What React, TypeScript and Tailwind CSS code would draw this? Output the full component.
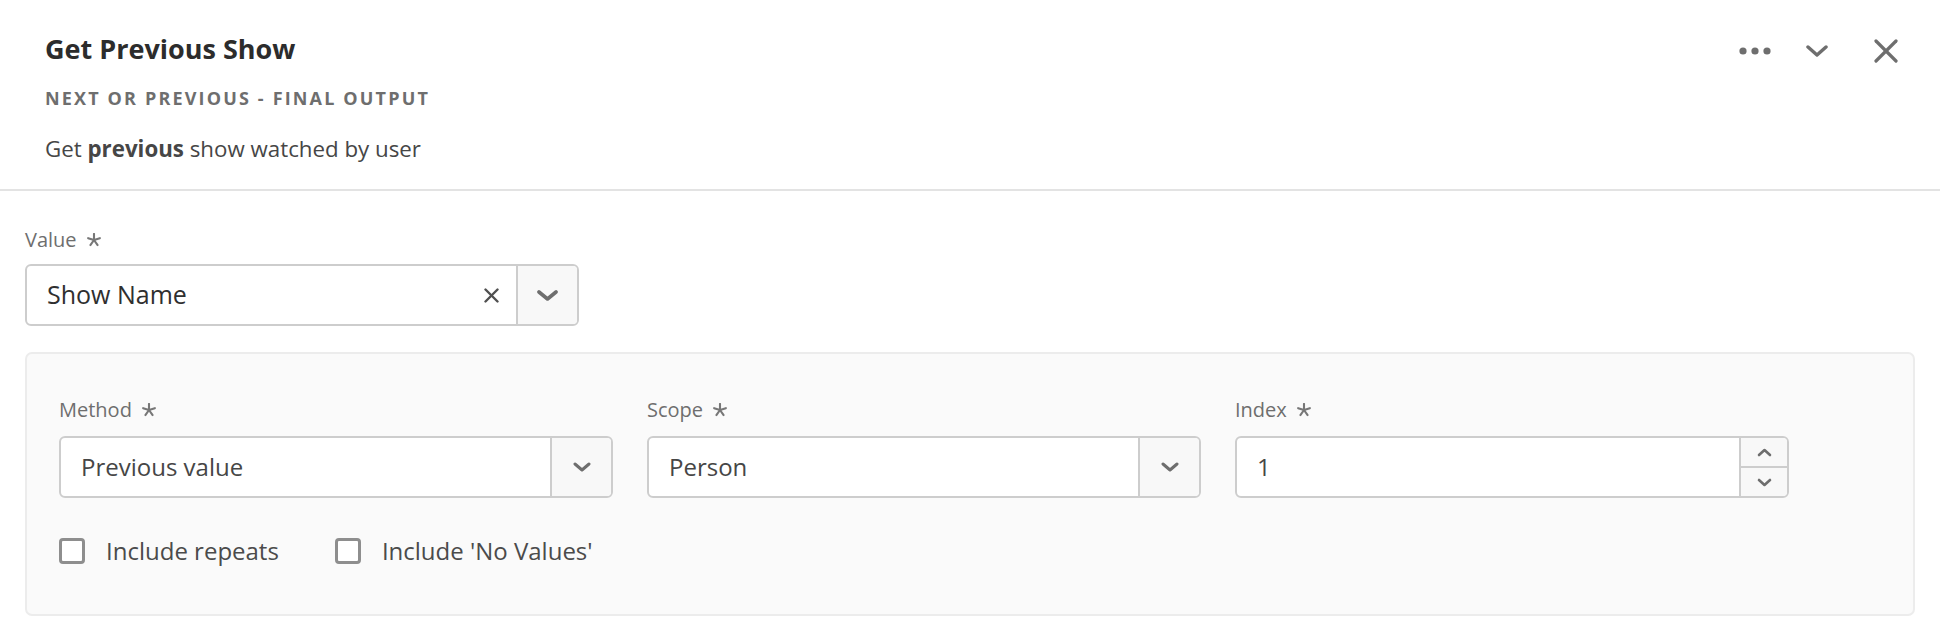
import React from "react";

const Asterisk = () => (
  <svg width="14" height="14" viewBox="0 0 12 12" className="ml-[10px] inline-block">
    <g stroke="#777777" strokeWidth="1.8" strokeLinecap="round">
      <line x1="6" y1="6" x2="6" y2="0.8" />
      <line x1="6" y1="6" x2="11" y2="4.4" />
      <line x1="6" y1="6" x2="9.1" y2="10.3" />
      <line x1="6" y1="6" x2="2.9" y2="10.3" />
      <line x1="6" y1="6" x2="1" y2="4.4" />
    </g>
  </svg>
);

const Chevron = ({ w = 20, h = 10, sw = 3.2, up = false }: { w?: number; h?: number; sw?: number; up?: boolean }) => (
  <svg width={w} height={h} viewBox={`0 0 ${w} ${h}`}>
    <polyline
      points={up ? `2,${h - 2} ${w / 2},2 ${w - 2},${h - 2}` : `2,2 ${w / 2},${h - 2} ${w - 2},2`}
      fill="none"
      stroke="#6e6e6e"
      strokeWidth={sw}
      strokeLinecap="round"
      strokeLinejoin="round"
    />
  </svg>
);

function Label({ text, className = "" }: { text: string; className?: string }) {
  return (
    <div className={`flex items-center text-[20px] leading-[24px] text-[#6e6e6e] ${className}`}>
      {text}
      <Asterisk />
    </div>
  );
}

function Picker({ value }: { value: string }) {
  return (
    <div className="flex h-[62px] w-[554px] rounded-[6px] border-2 border-[#cdcdcd] bg-white overflow-hidden">
      <div className="flex flex-1 items-center pl-[20px] text-[24px] text-[#464646]">{value}</div>
      <div className="flex w-[61px] items-center justify-center border-l-2 border-[#cdcdcd] bg-[#f8f8f8]">
        <Chevron w={18} h={10} sw={3} />
      </div>
    </div>
  );
}

function Check({ label }: { label: string }) {
  return (
    <div className="flex items-center gap-[21px]">
      <div className="h-[26px] w-[26px] rounded-[4px] border-[3px] border-[#8e8e8e] bg-white" />
      <span className="text-[24px] text-[#4b4b4b]">{label}</span>
    </div>
  );
}

export default function App() {
  return (
    <div className="h-[640px] w-[1940px] bg-white font-['Open_Sans',sans-serif]">
      <div className="flex items-start justify-between border-b-2 border-[#e3e3e3] pb-[26px] pl-[45px] pr-[42px] pt-[32px]">
        <div>
          <h1 className="text-[27px] font-bold leading-[34px] text-[#2c2c2c]">Get Previous Show</h1>
          <div className="mt-[20px] text-[18px] font-bold uppercase leading-[24px] tracking-[0.12em] text-[#6e6e6e]">
            Next or Previous - Final Output
          </div>
          <p className="mt-[25px] text-[22.3px] leading-[28px] text-[#464646]">
            Get <span className="font-bold">previous</span> show watched by user
          </p>
        </div>
        <div className="mt-[7px] flex items-center">
          <svg width="34" height="10" viewBox="0 0 34 10">
            <circle cx="5" cy="5" r="3.6" fill="#6e6e6e" />
            <circle cx="17" cy="5" r="3.6" fill="#6e6e6e" />
            <circle cx="29" cy="5" r="3.6" fill="#6e6e6e" />
          </svg>
          <div className="ml-[34px]">
            <Chevron w={22} h={12} sw={3.4} />
          </div>
          <svg width="24" height="24" viewBox="0 0 24 24" className="ml-[46px]">
            <g stroke="#6e6e6e" strokeWidth="3.2" strokeLinecap="round">
              <line x1="2" y1="2" x2="22" y2="22" />
              <line x1="22" y1="2" x2="2" y2="22" />
            </g>
          </svg>
        </div>
      </div>

      <div className="px-[25px] pt-[37px]">
        <Label text="Value" />
        <div className="mt-[12px] flex h-[62px] w-[554px] rounded-[6px] border-2 border-[#cdcdcd] bg-white overflow-hidden">
          <div className="flex flex-1 items-center justify-between pl-[20px] pr-[17px] text-[25px] text-[#2f2f2f]">
            <span>Show Name</span>
            <svg width="15" height="15" viewBox="0 0 15 15">
              <g stroke="#505050" strokeWidth="2.4" strokeLinecap="round">
                <line x1="1.5" y1="1.5" x2="13.5" y2="13.5" />
                <line x1="13.5" y1="1.5" x2="1.5" y2="13.5" />
              </g>
            </svg>
          </div>
          <div className="flex w-[61px] items-center justify-center border-l-2 border-[#cdcdcd] bg-[#f8f8f8]">
            <Chevron w={21} h={11} sw={3.6} />
          </div>
        </div>

        <div className="mt-[26px] h-[264px] rounded-[7px] border-2 border-[#ececec] bg-[#fafafa] pl-[32px] pt-[44px]">
          <div className="grid grid-cols-[554px_554px_554px] gap-x-[34px]">
            <div>
              <Label text="Method" className="mb-[14px]" />
              <Picker value="Previous value" />
            </div>
            <div>
              <Label text="Scope" className="mb-[14px]" />
              <Picker value="Person" />
            </div>
            <div>
              <Label text="Index" className="mb-[14px]" />
              <div className="flex h-[62px] w-[554px] rounded-[6px] border-2 border-[#cdcdcd] bg-white overflow-hidden">
                <div className="flex flex-1 items-center pl-[20px] text-[24px] text-[#464646]">1</div>
                <div className="flex w-[48px] flex-col border-l-2 border-[#cdcdcd] bg-[#f8f8f8]">
                  <div className="flex flex-1 items-center justify-center border-b-2 border-[#cdcdcd]">
                    <Chevron w={15} h={9} sw={2.6} up />
                  </div>
                  <div className="flex flex-1 items-center justify-center">
                    <Chevron w={15} h={9} sw={2.6} />
                  </div>
                </div>
              </div>
            </div>
          </div>
          <div className="mt-[35px] flex items-center gap-[56px]">
            <Check label="Include repeats" />
            <Check label="Include 'No Values'" />
          </div>
        </div>
      </div>
    </div>
  );
}
